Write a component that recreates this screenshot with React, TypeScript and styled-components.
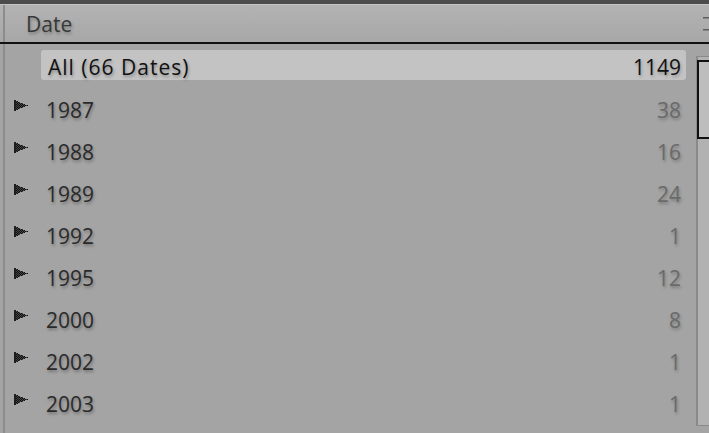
import React from "react";
import styled, { createGlobalStyle } from "styled-components";

const Global = createGlobalStyle`
  html, body { margin: 0; padding: 0; background: #a4a4a4; }
  body { font-family: "Open Sans", "Noto Sans", sans-serif; }
`;

const Panel = styled.div`
  width: 709px;
  height: 433px;
  overflow: hidden;
  background: #a4a4a4;
  display: flex;
  flex-direction: column;
`;

const TopBand = styled.div`
  height: 4px;
  background: #4c4c4c;
  border-bottom: 1px solid #c4c4c4;
  flex: none;
`;

const leftRule = `linear-gradient(to right, transparent 3px, #8c8c8c 3px, #8c8c8c 5px, transparent 5px)`;

const Header = styled.div`
  height: 37px;
  flex: none;
  display: flex;
  align-items: center;
  padding-left: 26px;
  background-image: ${leftRule}, linear-gradient(#b3b3b3, #a7a7a7);
  border-bottom: 2px solid #111;
`;

const HeaderTitle = styled.span`
  font-size: 21px;
  color: #383838;
  text-shadow: 1px 2px 3px rgba(0, 0, 0, 0.3);
`;

const HeaderGrip = styled.svg`
  margin-left: auto;
  flex: none;
`;

const Body = styled.div`
  flex: 1;
  display: flex;
  background-image: ${leftRule};
`;

const List = styled.div`
  flex: 1;
  padding-top: 3px;
  display: flex;
  flex-direction: column;
`;

const Row = styled.div`
  height: 42px;
  display: flex;
  align-items: center;
  padding-right: 15px;
`;

const AllBox = styled.div`
  align-self: flex-start;
  margin: 3px -5px 0 41px;
  flex: 1;
  height: 30px;
  box-sizing: border-box;
  padding: 5px 5px 0 7px;
  line-height: 24px;
  display: flex;
  background: #c3c3c3;
  border-radius: 3px;
`;

const Label = styled.span<{ $strong?: boolean; $spread?: number }>`
  font-size: 21px;
  color: ${(p) => (p.$strong ? "#111" : "#2a2a2a")};
  letter-spacing: ${(p) => p.$spread ?? 0}px;
  text-shadow: 1px 2px 3px rgba(0, 0, 0, 0.3);
`;

const Count = styled.span<{ $strong?: boolean }>`
  margin-left: auto;
  font-size: 21px;
  color: ${(p) => (p.$strong ? "#111" : "#6a6a6a")};
  text-shadow: 1px 2px 3px rgba(0, 0, 0, 0.25);
`;

const Arrow = styled.svg`
  flex: none;
  margin: -9px 18px 0 14px;
`;

const ScrollTrack = styled.div`
  flex: none;
  width: 13px;
  margin-top: 12px;
  height: 370px;
  box-sizing: border-box;
  border: 1px solid #8a8a8a;
  border-right: none;
  border-left-width: 2px;
  background: #b2b2b2;
  padding-top: 3px;
`;

const ScrollThumb = styled.div`
  height: 79px;
  box-sizing: border-box;
  border: 2px solid #111;
  border-right: none;
  background: #bdbdbd;
  margin-left: -1px;
`;

const TriangleIcon = () => (
  <Arrow width="14" height="11" viewBox="0 0 14 11" shapeRendering="crispEdges">
    <defs>
      <pattern id="dither" width="2" height="2" patternUnits="userSpaceOnUse">
        <rect width="2" height="2" fill="#444" />
        <rect x="0" y="0" width="1" height="1" fill="#111" />
        <rect x="1" y="1" width="1" height="1" fill="#111" />
      </pattern>
    </defs>
    <polygon points="0,0 14,5.5 0,11" fill="url(#dither)" />
    <rect x="0" y="0" width="2" height="11" fill="#1e1e1e" />
  </Arrow>
);

const years: [string, number][] = [
  ["1987", 38],
  ["1988", 16],
  ["1989", 24],
  ["1992", 1],
  ["1995", 12],
  ["2000", 8],
  ["2002", 1],
  ["2003", 1],
];

export default function App() {
  return (
    <>
      <Global />
      <Panel>
        <TopBand />
        <Header>
          <HeaderTitle>Date</HeaderTitle>
          <HeaderGrip width="6" height="14" viewBox="0 0 6 14">
            <rect x="0" y="0" width="6" height="1.5" fill="#5e5e5e" />
            <rect x="0" y="12" width="6" height="1.5" fill="#5e5e5e" />
          </HeaderGrip>
        </Header>
        <Body>
          <List>
            <Row>
              <AllBox>
                <Label $strong $spread={1}>All (66 Dates)</Label>
                <Count $strong>1149</Count>
              </AllBox>
            </Row>
            {years.map(([y, c]) => (
              <Row key={y}>
                <TriangleIcon />
                <Label>{y}</Label>
                <Count>{c}</Count>
              </Row>
            ))}
          </List>
          <ScrollTrack>
            <ScrollThumb />
          </ScrollTrack>
        </Body>
      </Panel>
    </>
  );
}
